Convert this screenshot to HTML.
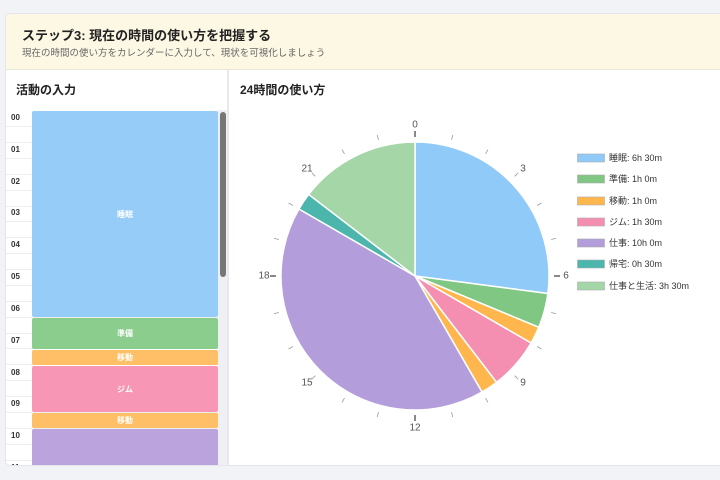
<!DOCTYPE html>
<html><head><meta charset="utf-8"><style>
*{margin:0;padding:0;box-sizing:border-box}
body{width:720px;height:480px;overflow:hidden;background:#f2f3f6;font-family:"Liberation Sans","Noto Sans CJK JP",sans-serif;position:relative}
.card{position:absolute;left:5px;top:13px;width:720px;height:453px;background:#fff;border:1px solid #e4e6ea;border-radius:5px;overflow:hidden}
.hdr{position:absolute;left:0;top:0;width:100%;height:56px;background:#fdf8e4;border-bottom:1px solid #e8e6da}
.hdr h1{position:absolute;left:16px;top:11px;font-size:13px;font-weight:bold;color:#222}
.hdr p{position:absolute;left:16px;top:31px;font-size:9.5px;color:#666}
.lt{position:absolute;left:10px;top:67px;font-size:12px;font-weight:bold;color:#222}
.rt{position:absolute;left:234px;top:67px;font-size:12px;font-weight:bold;color:#222}
.vd{position:absolute;left:221px;top:56px;width:2px;height:400px;background:#e8e9ec}
.hr{position:absolute;left:5px;font-size:8px;color:#333;font-weight:bold}
.ln{position:absolute;left:0px;width:216px;height:1px;background:#eceef0}
.blk{position:absolute;left:26px;width:186px;border-radius:2px;color:#fff;font-size:8px;font-weight:bold;display:flex;align-items:center;justify-content:center}
.sb{position:absolute;left:212px;top:96px;width:9px;height:360px;background:#eef0f3}
.th{position:absolute;left:213.5px;top:98px;width:6px;height:165px;background:#777;border-radius:3px}
</style></head><body>
<div class="card">
<div class="hdr"><h1>ステップ3: 現在の時間の使い方を把握する</h1><p>現在の時間の使い方をカレンダーに入力して、現状を可視化しましょう</p></div>
<div class="lt">活動の入力</div>
<div class="rt">24時間の使い方</div>
<div class="vd"></div>
<div class="ln" style="top:112px"></div><div class="ln" style="top:128px"></div><div class="ln" style="top:144px"></div><div class="ln" style="top:160px"></div><div class="ln" style="top:176px"></div><div class="ln" style="top:192px"></div><div class="ln" style="top:207px"></div><div class="ln" style="top:223px"></div><div class="ln" style="top:239px"></div><div class="ln" style="top:255px"></div><div class="ln" style="top:271px"></div><div class="ln" style="top:287px"></div><div class="ln" style="top:303px"></div><div class="ln" style="top:319px"></div><div class="ln" style="top:334px"></div><div class="ln" style="top:350px"></div><div class="ln" style="top:366px"></div><div class="ln" style="top:382px"></div><div class="ln" style="top:398px"></div><div class="ln" style="top:414px"></div><div class="ln" style="top:430px"></div><div class="ln" style="top:446px"></div>
<div class="hr" style="top:99px">00</div><div class="hr" style="top:131px">01</div><div class="hr" style="top:163px">02</div><div class="hr" style="top:194px">03</div><div class="hr" style="top:226px">04</div><div class="hr" style="top:258px">05</div><div class="hr" style="top:290px">06</div><div class="hr" style="top:322px">07</div><div class="hr" style="top:354px">08</div><div class="hr" style="top:385px">09</div><div class="hr" style="top:417px">10</div><div class="hr" style="top:449px">11</div>
<div class="blk" style="top:97px;height:206px;background:#96cdf8">睡眠</div>
<div class="blk" style="top:304px;height:31px;background:#8acd8d">準備</div>
<div class="blk" style="top:336px;height:15px;background:#ffbf66">移動</div>
<div class="blk" style="top:352px;height:46px;background:#f797b5">ジム</div>
<div class="blk" style="top:399px;height:15px;background:#ffbf66">移動</div>
<div class="blk" style="top:415px;height:45px;background:#bba3dd"></div>
<div class="sb"></div><div class="th"></div>
</div>
<svg width="720" height="480" style="position:absolute;left:0;top:0">
<g stroke="#fff" stroke-width="1.5">
<path d="M415,276 L415,142 A134,134 0 0 1 547.85,293.49Z" fill="#90caf9"/>
<path d="M415,276 L547.85,293.49 A134,134 0 0 1 538.8,327.28Z" fill="#81c784"/>
<path d="M415,276 L538.8,327.28 A134,134 0 0 1 531.05,343Z" fill="#ffb74d"/>
<path d="M415,276 L531.05,343 A134,134 0 0 1 496.58,382.31Z" fill="#f48fb1"/>
<path d="M415,276 L496.58,382.31 A134,134 0 0 1 482,392.05Z" fill="#ffb74d"/>
<path d="M415,276 L482,392.05 A134,134 0 0 1 298.95,209Z" fill="#b39ddb"/>
<path d="M415,276 L298.95,209 A134,134 0 0 1 308.69,194.42Z" fill="#4db6ac"/>
<path d="M415,276 L308.69,194.42 A134,134 0 0 1 415,142Z" fill="#a5d6a7"/>
</g>
<g transform="translate(415,276)" stroke="#999" stroke-width="0.8">
<line x1="0" y1="-141" x2="0" y2="-146" transform="rotate(15)"/><line x1="0" y1="-141" x2="0" y2="-146" transform="rotate(30)"/><line x1="0" y1="-141" x2="0" y2="-146" transform="rotate(45)"/><line x1="0" y1="-141" x2="0" y2="-146" transform="rotate(60)"/><line x1="0" y1="-141" x2="0" y2="-146" transform="rotate(75)"/><line x1="0" y1="-141" x2="0" y2="-146" transform="rotate(105)"/><line x1="0" y1="-141" x2="0" y2="-146" transform="rotate(120)"/><line x1="0" y1="-141" x2="0" y2="-146" transform="rotate(135)"/><line x1="0" y1="-141" x2="0" y2="-146" transform="rotate(150)"/><line x1="0" y1="-141" x2="0" y2="-146" transform="rotate(165)"/><line x1="0" y1="-141" x2="0" y2="-146" transform="rotate(195)"/><line x1="0" y1="-141" x2="0" y2="-146" transform="rotate(210)"/><line x1="0" y1="-141" x2="0" y2="-146" transform="rotate(225)"/><line x1="0" y1="-141" x2="0" y2="-146" transform="rotate(240)"/><line x1="0" y1="-141" x2="0" y2="-146" transform="rotate(255)"/><line x1="0" y1="-141" x2="0" y2="-146" transform="rotate(285)"/><line x1="0" y1="-141" x2="0" y2="-146" transform="rotate(300)"/><line x1="0" y1="-141" x2="0" y2="-146" transform="rotate(315)"/><line x1="0" y1="-141" x2="0" y2="-146" transform="rotate(330)"/><line x1="0" y1="-141" x2="0" y2="-146" transform="rotate(345)"/>
<g stroke="#555" stroke-width="1.4"><line x1="0" y1="-139" x2="0" y2="-145"/><line x1="0" y1="-139" x2="0" y2="-145" transform="rotate(90)"/><line x1="0" y1="-139" x2="0" y2="-145" transform="rotate(180)"/><line x1="0" y1="-139" x2="0" y2="-145" transform="rotate(270)"/></g>
</g>
<g font-family="Liberation Sans,sans-serif" font-size="10" fill="#555" text-anchor="middle" dominant-baseline="central">
<text x="415" y="125">0</text><text x="523" y="169">3</text><text x="566" y="276">6</text><text x="523" y="383">9</text><text x="415" y="428">12</text><text x="307" y="383">15</text><text x="264" y="276">18</text><text x="307" y="169">21</text>
</g>
<g stroke="#aaa" stroke-width="0.6" font-family="Liberation Sans,Noto Sans CJK JP,sans-serif" font-size="9">
<rect x="577.5" y="154" width="27" height="8" fill="#90caf9"/><rect x="577.5" y="175" width="27" height="8" fill="#81c784"/><rect x="577.5" y="197" width="27" height="8" fill="#ffb74d"/><rect x="577.5" y="218" width="27" height="8" fill="#f48fb1"/><rect x="577.5" y="239" width="27" height="8" fill="#b39ddb"/><rect x="577.5" y="260" width="27" height="8" fill="#4db6ac"/><rect x="577.5" y="282" width="27" height="8" fill="#a5d6a7"/>
<g stroke="none" fill="#333"><text x="609" y="161">睡眠: 6h 30m</text><text x="609" y="182">準備: 1h 0m</text><text x="609" y="204">移動: 1h 0m</text><text x="609" y="225">ジム: 1h 30m</text><text x="609" y="246">仕事: 10h 0m</text><text x="609" y="267">帰宅: 0h 30m</text><text x="609" y="289">仕事と生活: 3h 30m</text></g>
</g>
</svg>
</body></html>
